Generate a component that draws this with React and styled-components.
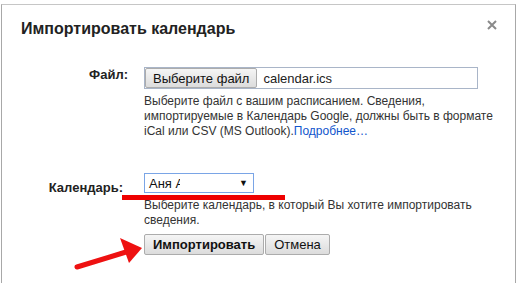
import styled, { createGlobalStyle } from 'styled-components';

const GlobalStyle = createGlobalStyle`
  html, body {
    margin: 0;
    padding: 0;
    background: #fff;
    overflow: hidden;
  }
  body {
    font-family: "Liberation Sans", Arial, sans-serif;
    color: #222;
  }
`;

const Dialog = styled.div`
  position: relative;
  box-sizing: border-box;
  margin: 4px 0 0 1px;
  width: 515px;
  height: 280px;
  border: 1px solid #a8a8a8;
  border-top-color: #c6c6c6;
  border-bottom: 0;
  background: #fff;
`;

const Header = styled.div`
  display: flex;
  align-items: flex-start;
  justify-content: space-between;
  padding: 14px 18px 0 19px;
`;

const Title = styled.h2`
  margin: 0;
  font-size: 16px;
  line-height: 20px;
  font-weight: bold;
  color: #222;
`;

const Close = styled.button`
  border: 0;
  background: none;
  padding: 0;
  margin-top: 1px;
  width: 10px;
  height: 10px;
  display: flex;
  cursor: pointer;
`;

const Form = styled.div`
  display: grid;
  grid-template-columns: 126px 1fr;
  column-gap: 16px;
  padding: 28px 0 0 0;
`;

const Label = styled.div`
  justify-self: end;
  padding-top: ${(p) => p.$top || 0}px;
  padding-right: ${(p) => p.$right || 0}px;
  font-size: 13px;
  line-height: 15px;
  font-weight: bold;
  color: #222;
`;

const Field = styled.div`
  display: flex;
  flex-direction: column;
  min-width: 0;
  padding-bottom: ${(p) => p.$bottom || 0}px;
`;

const FileBox = styled.div`
  display: flex;
  align-items: center;
  box-sizing: border-box;
  width: 334px;
  height: 22px;
  border: 1px solid #a9b5c8;
  background: #fff;
`;

const GrayButton = styled.button`
  box-sizing: border-box;
  height: ${(p) => p.$h || 20}px;
  padding: 0 ${(p) => p.$pad || 8}px;
  border: 1px solid #acacac;
  border-radius: 2px;
  background: linear-gradient(#f5f5f5, #dcdcdc);
  font-family: "Liberation Sans", Arial, sans-serif;
  font-size: 13px;
  font-weight: ${(p) => (p.$bold ? 'bold' : 'normal')};
  color: #111;
  cursor: pointer;
`;

const FileName = styled.span`
  margin-left: 6px;
  font-size: 13px;
  color: #222;
`;

const Help = styled.p`
  margin: 5px 0 0;
  font-size: 12px;
  line-height: 15px;
  white-space: nowrap;
  color: #333;
`;

const More = styled.a`
  color: #1155cc;
  text-decoration: none;
`;

const SelectBox = styled.div`
  position: relative;
  display: flex;
  align-items: center;
  justify-content: space-between;
  box-sizing: border-box;
  width: 110px;
  height: 20px;
  padding: 0 5px 0 4px;
  border: 1px solid #7aa5e6;
  font-size: 13px;
  color: #111;
`;

const Blot = styled.span`
  position: absolute;
  left: 35px;
  top: 1px;
  width: 24px;
  height: 16px;
  background: #fff;
`;

const Caret = styled.span`
  font-size: 9px;
  color: #111;
`;

const Buttons = styled.div`
  display: flex;
  gap: 1px;
`;

const Underline = styled.div`
  position: absolute;
  left: 120px;
  top: 190px;
  width: 163px;
  height: 5px;
  background: #ee0000;
`;

const Arrow = styled.svg`
  position: absolute;
  left: 60px;
  top: 224px;
`;

export default function App() {
  return (
    <>
      <GlobalStyle />
      <Dialog>
        <Header>
          <Title>Импортировать календарь</Title>
          <Close aria-label="Закрыть">
            <svg width="10" height="10" viewBox="0 0 10 10">
              <path d="M1 1L9 9M9 1L1 9" stroke="#8a8a8a" strokeWidth="2" />
            </svg>
          </Close>
        </Header>
        <Form>
          <Label>Файл:</Label>
          <Field $bottom={34}>
            <FileBox>
              <GrayButton $h={20} $pad={7}>Выберите файл</GrayButton>
              <FileName>calendar.ics</FileName>
            </FileBox>
            <Help>
              Выберите файл с вашим расписанием. Сведения,
              <br />
              импортируемые в Календарь Google, должны быть в формате
              <br />
              iCal или CSV (MS Outlook).<More href="#">Подробнее…</More>
            </Help>
          </Field>
          <Label $top={7} $right={5}>Календарь:</Label>
          <Field $bottom={6}>
            <SelectBox>
              <span>Аня А</span>
              <Blot />
              <Caret>▼</Caret>
            </SelectBox>
            <Help>
              Выберите календарь, в который Вы хотите импортировать
              <br />
              сведения.
            </Help>
          </Field>
          <div />
          <Buttons>
            <GrayButton $h={21} $bold>Импортировать</GrayButton>
            <GrayButton $h={21}>Отмена</GrayButton>
          </Buttons>
        </Form>
        <Underline />
        <Arrow width="90" height="50" viewBox="0 0 90 50">
          <path d="M15 38L64 23" stroke="#ee1111" strokeWidth="5" strokeLinecap="round" />
          <path d="M58 9L80 19L67 34Z" fill="#ee1111" />
        </Arrow>
      </Dialog>
    </>
  );
}
